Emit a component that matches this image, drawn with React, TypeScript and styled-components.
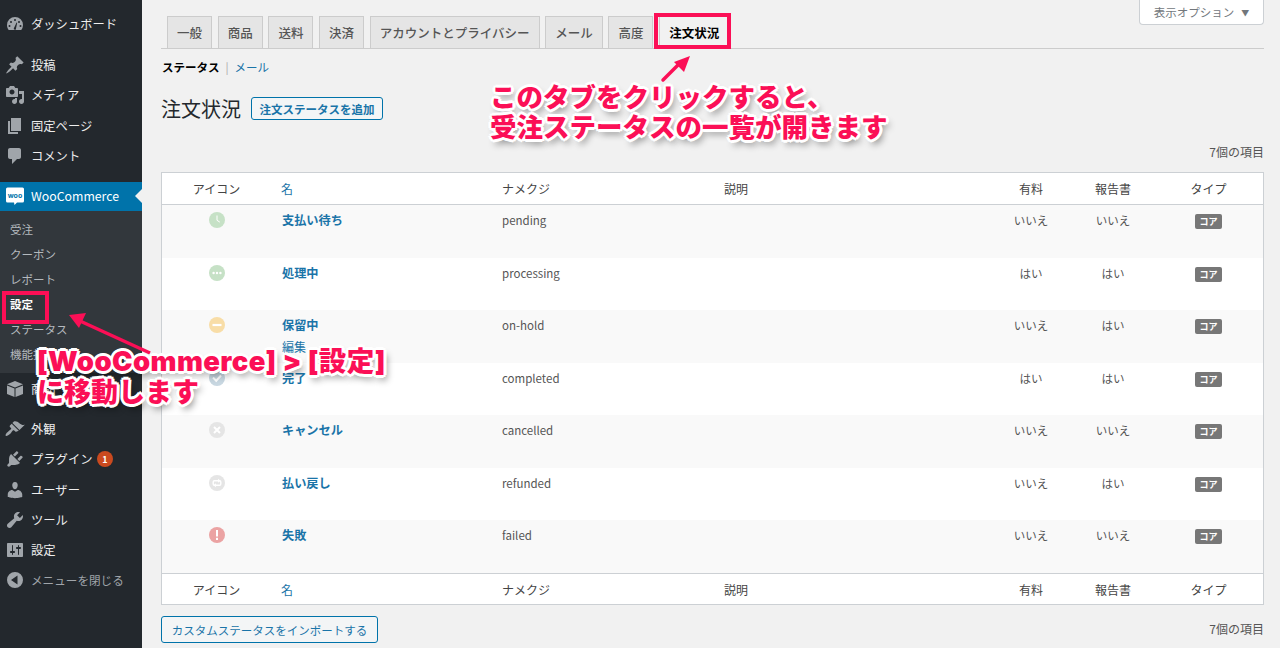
import React from "react";
import styled, { createGlobalStyle } from "styled-components";

const SANS = `"Noto Sans CJK JP", "Noto Sans", sans-serif`;
const PINK = "#fb0f56";
const LINK = "#1a74a8";

const GlobalStyle = createGlobalStyle`
    html, body {
        margin: 0;
        padding: 0;
        height: 648px;
        overflow: hidden;
        background: #f1f1f1;
        font-family: ${SANS};
        font-size: 12px;
        color: #444;
    }
`;

const Page = styled.div`
    position: relative;
    display: flex;
    width: 1280px;
    height: 648px;
    overflow: hidden;
`;

/* sidebar */
const Sidebar = styled.nav`
    width: 142px;
    flex: none;
    background: #23282d;
    display: flex;
    flex-direction: column;
    padding-top: 9px;
    box-sizing: border-box;
`;

const MenuItem = styled.div<{ $top?: number; $dim?: boolean }>`
    height: 30.2px;
    margin-top: ${(p) => p.$top ?? 0}px;
    display: flex;
    align-items: center;
    gap: 6px;
    padding-left: 5px;
    color: ${(p) => (p.$dim ? "#a0a5aa" : "#eee")};
    font-size: ${(p) => (p.$dim ? 11.6 : 12.3)}px;
    svg {
        flex: none;
        width: 20px;
        height: 20px;
        fill: #a0a5aa;
    }
`;

const WooItem = styled(MenuItem)`
    position: relative;
    height: 29px;
    box-sizing: border-box;
    background: #0073aa;
    color: #fff;
    &::after {
        content: "";
        position: absolute;
        right: 0;
        top: 7px;
        border: 7px solid transparent;
        border-right-color: #f1f1f1;
        border-left-width: 0;
    }
`;

const SubMenu = styled.div`
    background: #32373c;
    height: 162px;
    padding-top: 6px;
    box-sizing: border-box;
    margin-bottom: 1px;
`;

const SubItem = styled.div<{ $current?: boolean }>`
    height: 25px;
    display: flex;
    align-items: center;
    padding-left: 10px;
    font-size: 11.5px;
    white-space: nowrap;
    overflow: hidden;
    color: ${(p) => (p.$current ? "#fff" : "#b4b9be")};
    font-weight: ${(p) => (p.$current ? 700 : 400)};
`;

const PluginBadge = styled.span`
    width: 16px;
    height: 16px;
    margin-left: -1.5px;
    border-radius: 50%;
    background: #ca4a1f;
    color: #fff;
    font-size: 9px;
    font-weight: 700;
    display: flex;
    align-items: center;
    justify-content: center;
`;

/* main column */
const Main = styled.main`
    flex: 1;
    min-width: 0;
    padding: 0 16px 0 19px;
    display: flex;
    flex-direction: column;
`;

const ScreenMetaRow = styled.div`
    height: 16px;
    display: flex;
    justify-content: flex-end;
`;

const ScreenMetaButton = styled.div`
    width: 125px;
    height: 25px;
    flex: none;
    box-sizing: border-box;
    background: #fff;
    border: 1px solid #ccd0d4;
    border-top: none;
    border-radius: 0 0 4px 4px;
    color: #72777c;
    font-size: 11.5px;
    display: flex;
    align-items: center;
    justify-content: center;
    gap: 7px;
    span {
        font-size: 8px;
    }
`;

const TabBar = styled.div`
    height: 33px;
    box-sizing: border-box;
    border-bottom: 1px solid #ccc;
    display: flex;
    gap: 5.7px;
    padding-left: 6px;
`;

const Tab = styled.div<{ $active?: boolean }>`
    height: 32px;
    box-sizing: border-box;
    padding: 0 9px;
    border: 1px solid #ccc;
    border-bottom: none;
    background: ${(p) => (p.$active ? "#f1f1f1" : "#e5e5e5")};
    color: ${(p) => (p.$active ? "#000" : "#555")};
    font-size: 12.5px;
    font-weight: ${(p) => (p.$active ? 700 : 500)};
    display: flex;
    align-items: center;
`;

const SubNav = styled.div`
    margin-top: 10px;
    margin-left: 1px;
    height: 16px;
    display: flex;
    align-items: center;
    gap: 6px;
    font-size: 11.5px;
    color: #aaa;
    b {
        color: #000;
        font-weight: 700;
    }
    a {
        color: ${LINK};
    }
`;

const TitleRow = styled.div`
    margin-top: 20px;
    height: 26px;
    display: flex;
    align-items: center;
    gap: 10px;
`;

const Title = styled.h1`
    margin: 0;
    font-size: 20px;
    font-weight: 400;
    color: #23282d;
`;

const OutlineButton = styled.div`
    box-sizing: border-box;
    display: flex;
    align-items: center;
    justify-content: center;
    border: 1px solid #0073aa;
    border-radius: 3px;
    background: #f3f5f6;
    color: ${LINK};
`;

const AddButton = styled(OutlineButton)`
    width: 132px;
    height: 23px;
    margin-top: 1px;
    font-size: 11.5px;
    font-weight: 700;
`;

const ImportButton = styled(OutlineButton)`
    width: 217px;
    height: 27px;
    font-size: 11.5px;
`;

const ItemCount = styled.div`
    height: 18px;
    text-align: right;
    font-size: 12px;
    color: #555;
    line-height: 18px;
`;

const TopCount = styled(ItemCount)`
    margin-top: 22px;
`;

const BottomCount = styled(ItemCount)`
    margin-bottom: 2px;
`;

const Table = styled.div`
    margin-top: 11px;
    height: 433px;
    flex: none;
    box-sizing: border-box;
    background: #fff;
    border: 1px solid #ccd0d4;
    display: flex;
    flex-direction: column;
`;

const COLUMNS = "119px 221px 222px 266px 82px 82px 1fr";

const HeadRow = styled.div<{ $foot?: boolean }>`
    height: 30px;
    padding-bottom: ${(p) => (p.$foot ? 0 : 1)}px;
    flex: none;
    display: grid;
    grid-template-columns: ${COLUMNS};
    align-items: center;
    font-size: 12px;
    color: #444;
    ${(p) => (p.$foot ? "border-top" : "border-bottom")}: 1px solid #ccd0d4;
`;

const Rows = styled.div`
    flex: 1;
    display: grid;
    grid-template-rows: repeat(7, 1fr);
`;

const Row = styled.div<{ $odd: boolean }>`
    display: grid;
    grid-template-columns: ${COLUMNS};
    align-items: start;
    background: ${(p) => (p.$odd ? "#f9f9f9" : "#fff")};
    padding-top: 6px;
    font-size: 11.5px;
    color: #555;
    line-height: 18px;
`;

const Cell = styled.div<{ $center?: boolean; $link?: boolean }>`
    text-align: ${(p) => (p.$center ? "center" : "left")};
    color: ${(p) => (p.$link ? LINK : "inherit")};
`;

const IconHead = styled(Cell)`
    text-align: center;
    padding-right: 10px;
`;

const IconCell = styled.div`
    display: flex;
    justify-content: center;
    padding-right: 10px;
    svg {
        width: 16px;
        height: 16px;
        display: block;
        margin-top: 1px;
    }
`;

const NameCell = styled.div`
    padding-left: 1px;
    font-size: 12.2px;
    font-weight: 700;
    color: ${LINK};
    position: relative;
`;

const RowAction = styled.div`
    font-size: 12px;
    font-weight: 400;
    line-height: 16px;
    margin-top: 5px;
`;

const CoreTag = styled.span`
    display: inline-block;
    width: 27px;
    height: 15px;
    margin-top: 2px;
    border-radius: 2px;
    background: #777;
    color: #fff;
    font-size: 9px;
    font-weight: 700;
    line-height: 15px;
    text-align: center;
`;

const BottomRow = styled.div`
    margin-top: 11px;
    display: flex;
    align-items: center;
    justify-content: space-between;
`;

/* annotations sitting over the screenshot */
const Highlight = styled.div`
    position: absolute;
    box-sizing: border-box;
    border: 4px solid ${PINK};
`;

const TabHighlight = styled(Highlight)`
    left: 654px;
    top: 13px;
    width: 77px;
    height: 36px;
`;

const MenuHighlight = styled(Highlight)`
    left: 2px;
    top: 291px;
    width: 47px;
    height: 33px;
`;

const Note = styled.div`
    position: absolute;
    white-space: nowrap;
    font-weight: 900;
    color: ${PINK};
    text-shadow:
        3px 0 0 #fff, -3px 0 0 #fff, 0 3px 0 #fff, 0 -3px 0 #fff,
        2px 2px 0 #fff, -2px 2px 0 #fff, 2px -2px 0 #fff, -2px -2px 0 #fff,
        3px 5px 7px rgba(0, 0, 0, 0.45);
`;

const TabNote = styled(Note)`
    left: 490px;
    top: 80.500px;
    font-size: 26.500px;
    line-height: 30px;
`;

const MenuNote = styled(Note)`
    left: 37px;
    top: 346px;
    font-family: Inter, ${SANS};
    font-size: 27px;
    line-height: 31px;
`;

const MenuNoteLead = styled.span`
    font-size: 27.500px;
    letter-spacing: 0.4px;
`;

const ArrowLayer = styled.svg`
    position: absolute;
    left: 0;
    top: 0;
    width: 1280px;
    height: 648px;
    pointer-events: none;
`;

const DashIcon = () => (
    <svg viewBox="0 0 20 20">
        <path d="M3.760 16h12.480A7.970 7.970 0 0 0 18 11a8 8 0 0 0-16 0c0 1.900.66 3.640 1.760 5z" />
        <g fill="#23282d">
            <circle cx="10" cy="6" r="1" />
            <circle cx="6" cy="8" r="1" />
            <circle cx="14" cy="8" r="1" />
            <circle cx="4.500" cy="12" r="1" />
            <circle cx="15.500" cy="12" r="1" />
            <path d="M9 14l2.600-5.500.6.3L11 14.400a1.100 1.100 0 1 1-2-.4z" />
        </g>
    </svg>
);
const PinIcon = () => (
    <svg viewBox="0 0 20 20"><path d="M10.44 3.02l1.82-1.82 6.36 6.35-1.83 1.82c-1.05-.68-2.48-.57-3.41.36l-.75.75c-.92.93-1.04 2.35-.35 3.41l-1.83 1.82-2.41-2.41-2.8 2.79c-.42.42-3.38 2.71-3.8 2.29s1.86-3.39 2.28-3.81l2.79-2.79L4.1 9.36l1.83-1.82c1.05.69 2.48.57 3.4-.36l.75-.75c.93-.92 1.05-2.35.36-3.41z" /></svg>
);
const MediaIcon = () => (
    <svg viewBox="0 0 20 20"><path d="M13 11V4c0-.55-.45-1-1-1h-1.67L9 1H5L3.67 3H2c-.55 0-1 .45-1 1v7c0 .55.45 1 1 1h10c.55 0 1-.45 1-1zM7 4.5c1.38 0 2.5 1.12 2.5 2.5S8.38 9.5 7 9.5 4.5 8.38 4.5 7 5.62 4.5 7 4.5zM14 6h5v10.5c0 1.38-1.12 2.5-2.5 2.5S14 17.88 14 16.5s1.12-2.5 2.5-2.5c.17 0 .34.02.5.05V9h-3V6zm-4 8.05V13h2v3.5c0 1.38-1.12 2.5-2.5 2.5S7 17.88 7 16.5 8.12 14 9.5 14c.17 0 .34.02.5.05z" /></svg>
);
const PageIcon = () => (
    <svg viewBox="0 0 20 20"><path d="M6 15V2h10v13H6zm-1 1h8v2H3V5h2v11z" /></svg>
);
const CommentIcon = () => (
    <svg viewBox="0 0 20 20"><path d="M5 2h9c1.1 0 2 .9 2 2v7c0 1.1-.9 2-2 2h-2l-5 5v-5H5c-1.1 0-2-.9-2-2V4c0-1.1.9-2 2-2z" /></svg>
);
const WooIcon = () => (
    <svg viewBox="0 0 20 20">
        <path fill="#fff" d="M2.500 1.500h15A1.500 1.500 0 0 1 19 3v12a1.500 1.500 0 0 1-1.500 1.500H12L9.500 19l-.5-2.500H2.500A1.500 1.500 0 0 1 1 15V3a1.500 1.500 0 0 1 1.500-1.500z" />
        <text x="10" y="11.500" fontSize="7" fontWeight="700" textAnchor="middle" fill="#0073aa" fontFamily="Inter, sans-serif">woo</text>
    </svg>
);
const BoxIcon = () => (
    <svg viewBox="0 0 20 20">
        <path d="M10 2l8 3.200-8 3.200-8-3.200z" />
        <path d="M2 6.500l7.500 3V18L2 15z" />
        <path d="M18 6.500l-7.500 3V18l7.500-3z" />
    </svg>
);
const BrushIcon = () => (
    <svg viewBox="0 0 20 20"><path d="M14.48 11.06L7.41 3.99l1.5-1.5c.5-.56 2.3-.47 3.51.32 1.21.8 1.43 1.28 2.91 2.1 1.18.64 2.45 1.26 4.45.85zm-.71.71L6.7 4.7 4.93 6.47c-.39.39-.39 1.02 0 1.41l1.06 1.06c.39.39.39 1.03 0 1.42-.6.6-1.43 1.11-2.21 1.69-.35.26-.7.53-1.01.84C1.43 13.71 0 16.06.72 16.78c.72.71 3.07-.7 4.55-2.05.32-.31.59-.66.85-1.01.58-.78 1.09-1.61 1.69-2.21.39-.39 1.03-.39 1.42 0l1.06 1.06c.39.39 1.02.39 1.41 0z" /></svg>
);
const PlugIcon = () => (
    <svg viewBox="0 0 20 20"><path d="M13.11 4.36L9.87 7.6 8 5.73l3.24-3.24c.35-.34 1.05-.2 1.56.32.52.51.66 1.21.31 1.55zm-8 1.77l.91-1.12 9.01 9.01-1.19.84c-.71.71-2.63 1.16-3.82 1.16H6.14L4.9 17.26c-.59.59-1.54.59-2.12 0-.59-.58-.59-1.53 0-2.12l1.24-1.24v-3.88c0-1.13.4-3.19 1.09-3.89zm7.26 3.97l3.24-3.24c.34-.35 1.04-.21 1.55.31.52.51.66 1.21.31 1.55l-3.24 3.25z" /></svg>
);
const UserIcon = () => (
    <svg viewBox="0 0 20 20"><path d="M10 9.25c-2.27 0-2.73-3.44-2.73-3.44C7 4.02 7.82 2 9.97 2c2.16 0 2.98 2.02 2.71 3.81 0 0-.41 3.44-2.68 3.44zm0 2.57L12.72 10c2.39 0 4.52 2.33 4.52 4.53v2.49s-3.65 1.13-7.24 1.13c-3.65 0-7.24-1.13-7.24-1.13v-2.49c0-2.25 1.94-4.48 4.47-4.48z" /></svg>
);
const ToolIcon = () => (
    <svg viewBox="0 0 20 20"><path d="M16.68 9.77c-1.34 1.34-3.3 1.67-4.95.99l-5.41 6.52c-.99.99-2.59.99-3.58 0s-.99-2.59 0-3.57l6.52-5.42c-.68-1.65-.35-3.61.99-4.95 1.28-1.28 3.12-1.62 4.72-1.06l-2.89 2.89 2.82 2.82 2.86-2.87c.53 1.58.18 3.39-1.08 4.65z" /></svg>
);
const SettingsIcon = () => (
    <svg viewBox="0 0 20 20"><path d="M18 16V4c0-.55-.45-1-1-1H3c-.55 0-1 .45-1 1v12c0 .55.45 1 1 1h14c.55 0 1-.45 1-1zM8 11h1c.55 0 1 .45 1 1s-.45 1-1 1H8v1.500c0 .28-.22.5-.5.5s-.5-.22-.5-.5V13H6c-.55 0-1-.45-1-1s.45-1 1-1h1V5.500c0-.28.22-.5.5-.5s.5.22.5.5V11zm5-2h-1c-.55 0-1-.45-1-1s.45-1 1-1h1V5.500c0-.28.22-.5.5-.5s.5.22.5.5V7h1c.55 0 1 .45 1 1s-.45 1-1 1h-1v5.500c0 .28-.22.5-.5.5s-.5-.22-.5-.5V9z" /></svg>
);
const CollapseIcon = () => (
    <svg viewBox="0 0 20 20"><path fillRule="evenodd" d="M10 2a8 8 0 1 0 0 16 8 8 0 0 0 0-16zm2.500 12.500L6 10l6.500-4.500v9z" /></svg>
);

const StatusIcon = ({ color, children }: { color: string; children: React.ReactNode }) => (
    <svg viewBox="0 0 16 16">
        <circle cx="8" cy="8" r="8" fill={color} />
        {children}
    </svg>
);

const STATUS_ICONS: Record<string, React.ReactNode> = {
    pending: (
        <StatusIcon color="#c6e1c6">
            <path d="M8 3.500v4.800l2.800 1.800" stroke="#fff" strokeWidth="1" fill="none" />
        </StatusIcon>
    ),
    processing: (
        <StatusIcon color="#c6e1c6">
            <circle cx="4.600" cy="8" r="1.200" fill="#fff" />
            <circle cx="8" cy="8" r="1.200" fill="#fff" />
            <circle cx="11.400" cy="8" r="1.200" fill="#fff" />
        </StatusIcon>
    ),
    hold: (
        <StatusIcon color="#f8dda7">
            <rect x="3.500" y="6.900" width="9" height="2.200" fill="#fff" />
        </StatusIcon>
    ),
    completed: (
        <StatusIcon color="#c8d7e1">
            <path d="M4 7.500l3.200 3.200L12 5.500" stroke="#fff" strokeWidth="2" fill="none" />
        </StatusIcon>
    ),
    cancelled: (
        <StatusIcon color="#e5e5e5">
            <path d="M5 5l6 6M11 5l-6 6" stroke="#fff" strokeWidth="2" fill="none" />
        </StatusIcon>
    ),
    refunded: (
        <StatusIcon color="#e5e5e5">
            <rect x="4.200" y="5.800" width="7.600" height="4.400" rx="1.200" stroke="#fff" strokeWidth="1.400" fill="none" />
            <path d="M9 3.800L11.500 5.800 9 7.800zM7 8.200L4.500 10.200 7 12.200z" fill="#fff" />
        </StatusIcon>
    ),
    failed: (
        <StatusIcon color="#eba3a3">
            <rect x="7" y="3" width="2" height="6.500" fill="#fff" />
            <rect x="7" y="10.800" width="2" height="2.200" fill="#fff" />
        </StatusIcon>
    ),
};

interface OrderStatus {
    icon: string;
    name: string;
    slug: string;
    paid: string;
    report: string;
    action?: string;
}

const STATUSES: OrderStatus[] = [
    { icon: "pending", name: "支払い待ち", slug: "pending", paid: "いいえ", report: "いいえ" },
    { icon: "processing", name: "処理中", slug: "processing", paid: "はい", report: "はい" },
    { icon: "hold", name: "保留中", slug: "on-hold", paid: "いいえ", report: "はい", action: "編集" },
    { icon: "completed", name: "完了", slug: "completed", paid: "はい", report: "はい" },
    { icon: "cancelled", name: "キャンセル", slug: "cancelled", paid: "いいえ", report: "いいえ" },
    { icon: "refunded", name: "払い戻し", slug: "refunded", paid: "いいえ", report: "はい" },
    { icon: "failed", name: "失敗", slug: "failed", paid: "いいえ", report: "いいえ" },
];

const TABS = ["一般", "商品", "送料", "決済", "アカウントとプライバシー", "メール", "高度"];

const TableHead = ({ foot }: { foot?: boolean }) => (
    <HeadRow $foot={foot}>
        <IconHead>アイコン</IconHead>
        <Cell $link>名</Cell>
        <Cell>ナメクジ</Cell>
        <Cell>説明</Cell>
        <Cell $center>有料</Cell>
        <Cell $center>報告書</Cell>
        <Cell $center>タイプ</Cell>
    </HeadRow>
);

const App = () => {
    return (
        <Page>
            <GlobalStyle />
            <Sidebar>
                <MenuItem><DashIcon />ダッシュボード</MenuItem>
                <MenuItem $top={11}><PinIcon />投稿</MenuItem>
                <MenuItem><MediaIcon />メディア</MenuItem>
                <MenuItem><PageIcon />固定ページ</MenuItem>
                <MenuItem><CommentIcon />コメント</MenuItem>
                <WooItem $top={11}><WooIcon />WooCommerce</WooItem>
                <SubMenu>
                    <SubItem>受注</SubItem>
                    <SubItem>クーポン</SubItem>
                    <SubItem>レポート</SubItem>
                    <SubItem $current>設定</SubItem>
                    <SubItem>ステータス</SubItem>
                    <SubItem>機能拡張</SubItem>
                </SubMenu>
                <MenuItem><BoxIcon />商品</MenuItem>
                <MenuItem $top={10}><BrushIcon />外観</MenuItem>
                <MenuItem><PlugIcon />プラグイン<PluginBadge>1</PluginBadge></MenuItem>
                <MenuItem><UserIcon />ユーザー</MenuItem>
                <MenuItem><ToolIcon />ツール</MenuItem>
                <MenuItem><SettingsIcon />設定</MenuItem>
                <MenuItem $dim><CollapseIcon />メニューを閉じる</MenuItem>
            </Sidebar>

            <Main>
                <ScreenMetaRow>
                    <ScreenMetaButton>表示オプション <span>▼</span></ScreenMetaButton>
                </ScreenMetaRow>
                <TabBar>
                    {TABS.map((t) => <Tab key={t}>{t}</Tab>)}
                    <Tab $active>注文状況</Tab>
                </TabBar>
                <SubNav><b>ステータス</b>|<a>メール</a></SubNav>
                <TitleRow>
                    <Title>注文状況</Title>
                    <AddButton>注文ステータスを追加</AddButton>
                </TitleRow>
                <TopCount>7個の項目</TopCount>
                <Table>
                    <TableHead />
                    <Rows>
                        {STATUSES.map((s, i) => (
                            <Row key={s.slug} $odd={i % 2 === 0}>
                                <IconCell>{STATUS_ICONS[s.icon]}</IconCell>
                                <NameCell>
                                    {s.name}
                                    {s.action && <RowAction>{s.action}</RowAction>}
                                </NameCell>
                                <Cell>{s.slug}</Cell>
                                <Cell />
                                <Cell $center>{s.paid}</Cell>
                                <Cell $center>{s.report}</Cell>
                                <Cell $center><CoreTag>コア</CoreTag></Cell>
                            </Row>
                        ))}
                    </Rows>
                    <TableHead foot />
                </Table>
                <BottomRow>
                    <ImportButton>カスタムステータスをインポートする</ImportButton>
                    <BottomCount>7個の項目</BottomCount>
                </BottomRow>
            </Main>

            <ArrowLayer viewBox="0 0 1280 648">
                <path d="M663 80L680 63" stroke={PINK} strokeWidth="3.500" strokeLinecap="round" />
                <path d="M690 56L684 72L674 62z" fill={PINK} />
                <path d="M150 353L80 321" stroke={PINK} strokeWidth="3.500" />
                <path d="M69 315L86 313L79 328z" fill={PINK} />
            </ArrowLayer>
            <TabHighlight />
            <MenuHighlight />
            <TabNote>このタブをクリックすると、<br />受注ステータスの一覧が開きます</TabNote>
            <MenuNote><MenuNoteLead>[WooCommerce] &gt; [設定]</MenuNoteLead><br />に移動します</MenuNote>
        </Page>
    );
};

export default App;
